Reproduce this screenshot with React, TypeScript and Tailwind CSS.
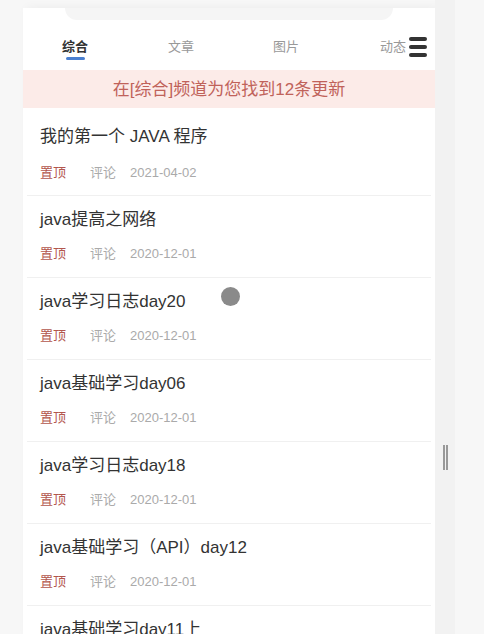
const articles = [
  { id: 1, title: '我的第一个 JAVA 程序', date: '2021-04-02' },
  { id: 2, title: 'java提高之网络', date: '2020-12-01' },
  { id: 3, title: 'java学习日志day20', date: '2020-12-01' },
  { id: 4, title: 'java基础学习day06', date: '2020-12-01' },
  { id: 5, title: 'java学习日志day18', date: '2020-12-01' },
  { id: 6, title: 'java基础学习（API）day12', date: '2020-12-01' },
  { id: 7, title: 'java基础学习day11上', date: '2020-12-01' }
];

const App = () => {
  return (
    <div
      className="relative flex h-[634px] overflow-hidden bg-[#f7f7f7]"
      style={{ fontFamily: '"Liberation Sans", "Noto Sans CJK SC", sans-serif' }}
    >
      <main className="ml-[23px] mt-2 w-[412px] bg-white shadow-[4px_0_10px_rgba(0,0,0,0.05)]">
        {/* search bar peeking out */}
        <div className="mx-[42px] h-3 rounded-b-xl bg-[#f5f5f5]" />

        {/* tabs */}
        <div className="flex h-[50px] items-center pl-[39px] pr-2 pt-[4px] text-[13px]">
          <div className="relative w-[106px] font-bold text-[#333]">
            综合
            <span className="absolute left-[4px] top-[20px] h-[3px] w-[19px] rounded bg-[#4a7fd0]" />
          </div>
          <div className="w-[105px] text-[#999]">文章</div>
          <div className="w-[107px] text-[#999]">图片</div>
          <div className="text-[#999]">动态</div>
          <div className="ml-[3px] flex flex-col gap-[4px]">
            <span className="h-[4px] w-[18px] rounded-sm bg-[#333]" />
            <span className="h-[4px] w-[18px] rounded-sm bg-[#333]" />
            <span className="h-[4px] w-[18px] rounded-sm bg-[#333]" />
          </div>
        </div>

        {/* update banner */}
        <div className="flex h-[38px] items-center justify-center bg-[#fcebe8] pt-[2px] text-[17px] text-[#c0625a]">
          在[综合]频道为您找到12条更新
        </div>

        {/* list */}
        <div>
          {articles.map((a, i) => (
            <div
              key={a.id}
              className={
                i === 0
                  ? 'mx-1 border-b border-[#f0f0f0] px-[13px] pb-[13px] pt-[17px]'
                  : 'mx-1 border-b border-[#f0f0f0] px-[13px] pb-[14px] pt-[12px]'
              }
            >
              <div className="text-[17px] leading-[24px] text-[#333]">{a.title}</div>
              <div
                className={
                  i === 0
                    ? 'mt-[15px] flex items-center text-[13px] leading-[18px]'
                    : 'mt-[13px] flex items-center text-[13px] leading-[18px]'
                }
              >
                <span className="w-[50px] text-[#b3564d]">置顶</span>
                <span className="w-[40px] text-[#aaa]">评论</span>
                <span className="text-[#aaa]">{a.date}</span>
              </div>
            </div>
          ))}
        </div>
      </main>

      {/* resize handle */}
      <div className="flex w-[20px] flex-col bg-[#f2f2f2] pl-[8px] pt-[445px]">
        <div className="flex gap-[1px]">
          <span className="h-[25px] w-[2px] bg-[#999]" />
          <span className="h-[25px] w-[2px] bg-[#999]" />
        </div>
      </div>

      {/* touch cursor */}
      <span className="absolute left-[221px] top-[287px] h-[19px] w-[19px] rounded-full bg-[#8a8a8a]" />
    </div>
  );
};

export default App;
